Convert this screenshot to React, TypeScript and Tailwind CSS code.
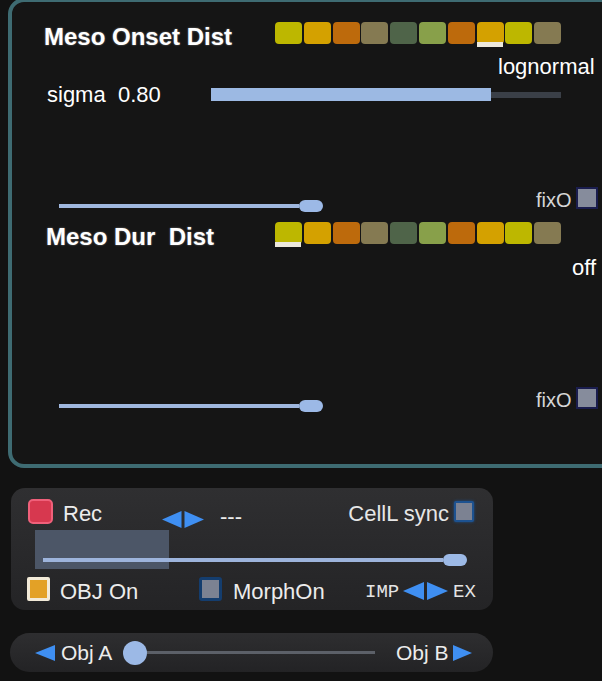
import React from "react";

const swatchColors = [
  "bg-[#bdb700]",
  "bg-[#d4a100]",
  "bg-[#bd6a0c]",
  "bg-[#857a52]",
  "bg-[#4f6449]",
  "bg-[#88a04a]",
  "bg-[#bd6a0c]",
  "bg-[#d4a100]",
  "bg-[#bdb700]",
  "bg-[#857a52]",
];

function Swatches({ selected }: { selected: number }) {
  return (
    <div className="flex gap-[1.8px]">
      {swatchColors.map((c, i) => (
        <div key={i} className={`relative h-[22px] w-[27px] rounded-[4px] ${c}`}>
          {i === selected && (
            <div className="absolute left-0 top-[20px] h-[5px] w-[26px] bg-[#ece8dc]" />
          )}
        </div>
      ))}
    </div>
  );
}

function SliderFix() {
  return (
    <div className="flex h-[22px] items-start">
      <div className="ml-[47px] mt-[13px] flex h-[12px] items-center">
        <div className="h-[4px] w-[240px] bg-[#9fb7de]" />
        <div className="h-[12px] w-[24px] rounded-full bg-[#9cb9e6]" />
      </div>
      <div className="ml-[213px] mt-[3px] w-[40px] text-[20px] leading-[20px] text-[#d6d6d6]">fixO</div>
      <div className="h-[22px] w-[22px] border-2 border-[#1a1d4e] bg-[#868c9c]" />
    </div>
  );
}

function ArrowPair({ w, h }: { w: number; h: number }) {
  const half = (w - 3) / 2;
  return (
    <svg width={w} height={h} viewBox={`0 0 ${w} ${h}`}>
      <polygon points={`0,${h / 2} ${half},0 ${half},${h}`} fill="#3f8ff2" />
      <polygon points={`${half + 3},0 ${w},${h / 2} ${half + 3},${h}`} fill="#3f8ff2" />
    </svg>
  );
}

export default function App() {
  return (
    <div className="h-[681px] w-[602px] overflow-hidden bg-[#121212] font-['Liberation_Sans',Arial,sans-serif] text-[#f2f2f2]">
      {/* Top patcher panel */}
      <div className="ml-[8px] mt-[-2px] flex h-[470px] w-[640px] flex-col rounded-[16px] border-4 border-[#3e6b72] bg-[#151515]">
        <div className="mt-[20px] flex h-[28px] items-start">
          <div className="ml-[32px] mt-[3px] w-[231px] text-[24px] font-bold leading-[24px] text-white [text-shadow:0_0_2px_rgba(255,255,255,0.45)]">
            Meso Onset Dist
          </div>
          <Swatches selected={7} />
        </div>
        <div className="ml-[486px] mt-[6px] h-[22px] text-[22px] leading-[22px] text-white">lognormal</div>
        <div className="mt-[6px] flex h-[22px] items-start">
          <div className="ml-[35px] w-[164px] whitespace-pre text-[22px] leading-[22px] text-white">sigma  0.80</div>
          <div className="mt-[4px] flex items-start">
            <div className="h-[13px] w-[280px] bg-[#9cb9e3]" />
            <div className="mt-[4px] h-[6px] w-[70px] bg-[#3a3f47]" />
          </div>
        </div>
        <div className="mt-[81px]">
          <SliderFix />
        </div>
        <div className="mt-[13px] flex h-[28px] items-start">
          <div className="ml-[34px] mt-[3px] w-[229px] whitespace-pre text-[24px] font-bold leading-[24px] text-white [text-shadow:0_0_2px_rgba(255,255,255,0.45)]">
            Meso Dur  Dist
          </div>
          <Swatches selected={0} />
        </div>
        <div className="ml-[560px] mt-[7px] h-[22px] text-[22px] leading-[22px] text-white">off</div>
        <div className="mt-[108px]">
          <SliderFix />
        </div>
      </div>

      {/* Rec panel */}
      <div className="ml-[11px] mt-[20px] flex h-[122px] w-[482px] flex-col rounded-[14px] bg-linear-to-b from-[#2f2f31] to-[#242426]">
        <div className="mt-[11px] flex h-[25px] items-start">
          <div className="ml-[17px] h-[25px] w-[25px] rounded-[5px] border-2 border-[#f0607a] bg-[#d7384f]" />
          <div className="ml-[10px] mt-[4px] w-[99px] text-[22px] leading-[22px] text-[#ececec]">Rec</div>
          <div className="mt-[12px]">
            <ArrowPair w={42} h={17} />
          </div>
          <div className="ml-[16px] mt-[7px] text-[22px] leading-[22px] text-[#ececec]">---</div>
          <div className="flex-1" />
          <div className="mt-[4px] text-[22px] leading-[22px] text-[#e6e6e6]">CellL sync</div>
          <div className="ml-[5px] mr-[19px] mt-[2px] h-[21px] w-[20px] rounded-[2px] border-2 border-[#1d5290] bg-[#7c8292] shadow-[0_0_3px_#1d5290]" />
        </div>
        <div className="relative ml-[24px] mt-[6px] h-[39px]">
          <div className="h-[39px] w-[134px] bg-[#4c5667]" />
          <div className="absolute left-[8px] top-[24px] flex h-[12px] w-[424px] items-center">
            <div className="h-[4px] flex-1 bg-[#9db4dc]" />
            <div className="h-[12px] w-[24px] rounded-full bg-[#9cb9e6]" />
          </div>
        </div>
        <div className="mt-[8px] flex h-[24px] items-start">
          <div className="ml-[16px] h-[24px] w-[23px] rounded-[2px] border-[3px] border-[#f2ead8] bg-[#e3a126]" />
          <div className="ml-[10px] mt-[4px] w-[139px] text-[22px] leading-[22px] text-[#ececec]">OBJ On</div>
          <div className="h-[24px] w-[23px] rounded-[3px] border-[3px] border-[#143d6e] bg-[#7c8292]" />
          <div className="ml-[11px] mt-[4px] w-[132px] text-[22px] leading-[22px] text-[#ececec]">MorphOn</div>
          <div className="mt-[6px] w-[38px] font-['Liberation_Mono',monospace] text-[19px] leading-[19px] text-[#e4e4e4]">IMP</div>
          <div className="mt-[5px]">
            <ArrowPair w={45} h={18} />
          </div>
          <div className="ml-[5px] mt-[6px] font-['Liberation_Mono',monospace] text-[19px] leading-[19px] text-[#e4e4e4]">EX</div>
        </div>
      </div>

      {/* Obj A/B panel */}
      <div className="ml-[10px] mt-[23px] flex h-[39px] w-[483px] items-center rounded-full bg-linear-to-b from-[#2e2e30] to-[#232325]">
        <svg className="ml-[25px]" width="20" height="16" viewBox="0 0 20 16">
          <polygon points="0,8 20,0 20,16" fill="#3f8ff2" />
        </svg>
        <div className="ml-[6px] w-[62px] text-[21px] leading-[21px] text-[#ececec]">Obj A</div>
        <div className="h-[24px] w-[24px] rounded-full bg-[#9cb9e6]" />
        <div className="h-[3px] w-[228px] bg-[#5c6068]" />
        <div className="ml-[21px] w-[57px] text-[21px] leading-[21px] text-[#ececec]">Obj B</div>
        <svg width="19" height="16" viewBox="0 0 19 16">
          <polygon points="0,0 19,8 0,16" fill="#3f8ff2" />
        </svg>
      </div>
    </div>
  );
}
